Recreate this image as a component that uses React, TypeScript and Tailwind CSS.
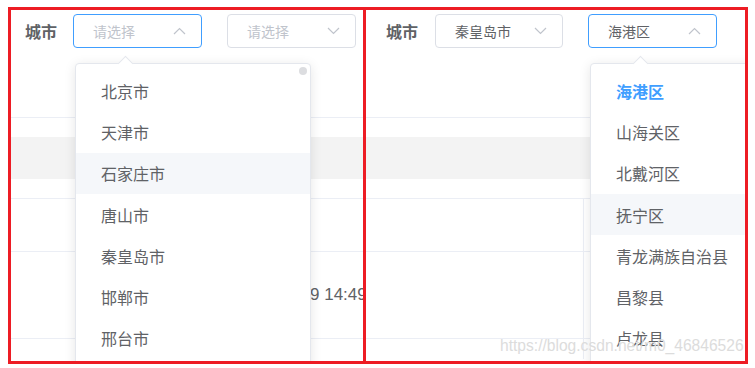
import React from 'react';

const font = { fontFamily: '"Noto Sans CJK SC", "Liberation Sans", sans-serif' };

const Chevron: React.FC<{ up?: boolean }> = ({ up }) => (
    <svg width="13" height="8" viewBox="0 0 13 8" className="text-[#c0c4cc]">
        <polyline
            points={up ? '1,7 6.5,1.5 12,7' : '1,1 6.5,6.5 12,1'}
            fill="none"
            stroke="currentColor"
            strokeWidth="1.2"
        />
    </svg>
);

interface SelectProps {
    value?: string;
    open?: boolean;
    width: string;
}

const Select: React.FC<SelectProps> = ({ value, open, width }) => (
    <div
        className={`${width} h-[34px] rounded-[4px] border flex items-center justify-between pl-[19px] pr-[15px] bg-white ${
            open ? 'border-[#409eff]' : 'border-[#dcdfe6]'
        }`}
    >
        <span className={`text-[14px] ${value ? 'text-[#606266]' : 'text-[#c0c4cc]'}`}>{value ?? '请选择'}</span>
        <Chevron up={open} />
    </div>
);

interface MenuProps {
    items: string[];
    active?: string;
    hover: string;
    left: string;
    scrollThumb?: boolean;
}

const Menu: React.FC<MenuProps> = ({ items, active, hover, left, scrollThumb }) => (
    <div
        className={`absolute top-[53px] ${left} w-[236px] h-[320px] bg-white border border-[#e4e7ed] rounded-[4px] shadow-[0_2px_12px_0_rgba(0,0,0,0.1)] z-10`}
    >
        {/* caret */}
        <div className="absolute -top-[6px] left-[44px] w-[11px] h-[11px] rotate-45 bg-white border-t border-l border-[#e4e7ed]" />
        {scrollThumb && <div className="absolute top-[3px] right-[3px] w-[8px] h-[8px] rounded-full bg-[#dcdde0]" />}
        <div className="pt-[6px] relative">
            {items.map((it) => (
                <div
                    key={it}
                    className={`h-[41.3px] flex items-center pl-[25px] text-[16px] ${
                        it === hover ? 'bg-[#f5f7fa]' : ''
                    } ${it === active ? 'text-[#409eff] font-bold' : 'text-[#606266]'}`}
                >
                    {it}
                </div>
            ))}
        </div>
    </div>
);

const TableRows: React.FC<{ colLine?: boolean; timeText?: boolean }> = ({ colLine, timeText }) => (
    <div className="flex flex-col">
        <div className="h-[19px]" />
        <div className="h-[42px] bg-[#f3f3f3]" />
        <div className="h-[20px] border-b border-[#ebeef5]" />
        <div className="h-[53px] border-b border-[#ebeef5] flex">
            {colLine && <div className="ml-[217px] border-l border-[#ebeef5]" />}
        </div>
        <div className="h-[87px] border-b border-[#ebeef5] flex items-center">
            {colLine && <div className="ml-[217px] h-full border-l border-[#ebeef5]" />}
            {timeText && (
                <span className="ml-[299px] whitespace-nowrap text-[17px] text-[#606266]" style={{ fontFamily: '"Liberation Sans", sans-serif' }}>
                    9 14:49
                </span>
            )}
        </div>
        <div className="h-[20px] flex">
            {colLine && <div className="ml-[217px] h-full border-l border-[#ebeef5]" />}
        </div>
    </div>
);

export default function App() {
    return (
        <div className="w-[755px] h-[368px] bg-white pl-[8px] pt-[7px] relative" style={font}>
            <div className="flex w-[740px] h-[357px] border-[3px] border-[#ed1c24]">
                {/* left panel */}
                <div className="relative w-[352px] h-full overflow-hidden">
                    <div className="h-[108px] border-b border-[#ebeef5] pt-[4px] pl-[14px] flex items-start">
                        <div className="h-[34px] flex items-center">
                            <span className="text-[16px] font-bold text-[#606266] mr-[16px]">城市</span>
                            <Select open width="w-[129px]" />
                            <div className="w-[25px]" />
                            <Select width="w-[129px]" />
                        </div>
                    </div>
                    <TableRows timeText />
                    <Menu
                        left="left-[64px]"
                        items={['北京市', '天津市', '石家庄市', '唐山市', '秦皇岛市', '邯郸市', '邢台市']}
                        hover="石家庄市"
                        scrollThumb
                    />
                </div>
                <div className="w-[3px] h-full bg-[#ed1c24]" />
                {/* right panel */}
                <div className="relative w-[379px] h-full overflow-hidden">
                    <div className="h-[108px] border-b border-[#ebeef5] pt-[4px] pl-[20px] flex items-start">
                        <div className="h-[34px] flex items-center">
                            <span className="text-[16px] font-bold text-[#606266] mr-[17px]">城市</span>
                            <Select value="秦皇岛市" width="w-[128px]" />
                            <div className="w-[25px]" />
                            <Select value="海港区" open width="w-[129px]" />
                        </div>
                    </div>
                    <TableRows colLine />
                    <Menu
                        left="left-[224px]"
                        items={['海港区', '山海关区', '北戴河区', '抚宁区', '青龙满族自治县', '昌黎县', '卢龙县']}
                        active="海港区"
                        hover="抚宁区"
                    />
                </div>
            </div>
            {/* watermark */}
            <div
                className="absolute left-[500px] top-[334px] text-[15.6px] text-[#dcdcdc] whitespace-nowrap z-20"
                style={{ fontFamily: '"Liberation Sans", sans-serif' }}
            >
                https://blog.csdn.net/m0_46846526
            </div>
        </div>
    );
}
